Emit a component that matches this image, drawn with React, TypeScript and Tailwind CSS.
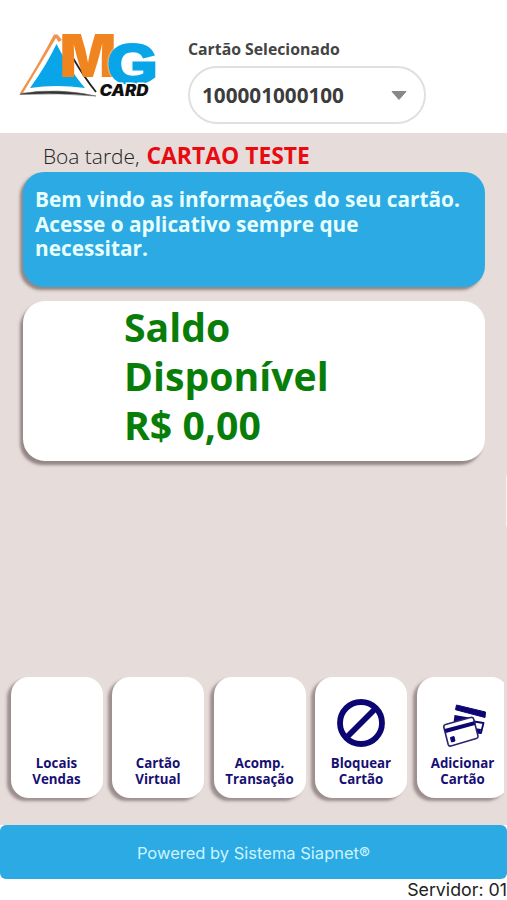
import React from 'react';

const Logo: React.FC = () => (
  <svg className="block" width="148" height="76" viewBox="14 26 148 76" role="img" aria-label="MG Card">
    <path d="M19.500 94 Q39 63 54 34.500 L57.500 34.500 L62 40 L58.500 42 L56 38 L23 93 Z" fill="#f0944c" />
    <path d="M21 93.500 Q58 87.500 96 96 Q59 92.500 20 94.500 Z" fill="#333" stroke="#666" strokeWidth="0.600" />
    <path d="M73 58 Q84 77 96 92" fill="none" stroke="#222" strokeWidth="1.800" />
    <path d="M56.500 44 C65 60 73 74 85 88 Q56 84 30 88 Q46 66 56.500 44 Z" fill="#08a6e8" />
    <text x="59.500" y="77" fontFamily="Inter, sans-serif" fontWeight="900" fontSize="59.500" textLength="57" lengthAdjust="spacingAndGlyphs" fill="#f0841f">M</text>
    <text className="drop-shadow-[0_0_1px_#fff]" x="107.500" y="82.500" fontFamily="Liberation Sans, sans-serif" fontWeight="700" fontSize="55" textLength="50" lengthAdjust="spacingAndGlyphs" fill="#08a6e8" stroke="#08a6e8" strokeWidth="3">G</text>
    <text x="99.500" y="95.500" fontFamily="Inter, sans-serif" fontWeight="900" fontStyle="italic" fontSize="15.500" textLength="49" lengthAdjust="spacingAndGlyphs" fill="#111" stroke="#fff" strokeWidth="3" paintOrder="stroke">CARD</text>
  </svg>
);

const BlockIcon: React.FC = () => (
  <svg width="48" height="48" viewBox="0 0 48 48" fill="none" stroke="#0c0673" strokeWidth="5.800">
    <circle cx="24" cy="24" r="21" />
    <path d="M10 38 38 10" />
  </svg>
);

const CardsIcon: React.FC = () => (
  <svg width="48" height="48" viewBox="0 0 48 48">
    <path d="M17.500 6 46.500 13 46 18.500 16.500 10.700Z" fill="#0c0673" stroke="#0c0673" strokeLinejoin="round" />
    <path d="M15.500 16 33 19 30 25 14.500 24Z" fill="#0c0673" />
    <path d="M35 22.500 44.500 24 42 34 37 33.500Z" fill="#fff" stroke="#0c0673" strokeWidth="1.800" strokeLinejoin="round" />
    <path d="M35 29 42 30 41.500 34 37 34Z" fill="#0c0673" />
    <path d="M6.500 25.500 31.500 18.500 Q34 18 34.700 20 L39 37 Q39.300 39 37.300 39.500 L12 47 Q9.800 47.500 9.200 45.500 L4.800 28 Q4.500 26 6.500 25.500Z" fill="#fff" stroke="#29256f" strokeWidth="1.600" />
    <path d="M5.500 30 35 22.200 36 26 6.800 34Z" fill="#0c0673" />
    <path d="M11.500 38.500 15 37.500 16 42 12.500 43Z" fill="#0c0673" stroke="#0c0673" strokeLinejoin="round" />
  </svg>
);

const actions = [
  { lines: ['Locais', 'Vendas'], icon: null },
  { lines: ['Cartão', 'Virtual'], icon: null },
  { lines: ['Acomp.', 'Transação'], icon: null },
  { lines: ['Bloquear', 'Cartão'], icon: <BlockIcon /> },
  { lines: ['Adicionar', 'Cartão'], icon: <CardsIcon /> },
];

export default function App() {
  return (
    <div className="relative flex h-[900px] w-[507px] flex-col overflow-hidden bg-white font-['Open_Sans','Noto_Sans',sans-serif]">
      <header className="flex h-[133px] shrink-0 pl-3.5">
        <div className="w-[174px] pt-[26px]">
          <Logo />
        </div>
        <div className="pt-[38px]">
          <label className="block h-[28px] text-[15.800px] leading-[22px] font-bold text-[#444]">Cartão Selecionado</label>
          <button className="flex h-[58px] w-[238px] items-center justify-between rounded-full border-2 border-[#e0e0e0] pr-[17px] pl-[12px] text-[20.700px] font-bold text-[#3c3c3c]">
            <span className="pt-0.5">100001000100</span>
            <svg width="16" height="9" viewBox="0 0 16 9">
              <path d="M1 .5H15L8 8.500Z" fill="#888" stroke="#888" strokeLinejoin="round" />
            </svg>
          </button>
        </div>
      </header>

      <main className="flex h-[692px] shrink-0 flex-col bg-[#e6dcda]">
        <p className="flex h-[39px] items-baseline gap-[7px] pt-[9px] pl-[43px] leading-[28px] whitespace-nowrap">
          <span className="text-[20.900px] font-light text-[#222]">Boa tarde,</span>
          <strong className="text-[22.900px] font-bold text-[#e90b12]">CARTAO TESTE</strong>
        </p>
        <section className="ml-[23px] h-[115px] w-[462px] rounded-[21px] bg-[#2caae3] pt-[15px] pl-3 text-[20.800px] leading-[24.500px] font-bold whitespace-nowrap text-[#e8ffff] shadow-[-3px_3px_3px_rgba(65,50,50,0.5)]">
          <p>Bem vindo as informações do seu cartão.</p>
          <p>Acesse o aplicativo sempre que</p>
          <p>necessitar.</p>
        </section>
        <section className="mt-[14px] ml-[23px] h-[160px] w-[462px] rounded-[22px] bg-white pt-px pl-[101px] text-[39.200px] leading-[49px] font-bold text-[#087e09] shadow-[-3px_4px_3px_rgba(65,50,50,0.5)]">
          <p>Saldo</p>
          <p>Disponível</p>
          <p>R$ 0,00</p>
        </section>
        <nav className="mt-auto mb-[21px] flex w-[504px] gap-[9.500px] overflow-hidden pt-2 pb-1.5 pl-[10.500px]">
          {actions.map((action) => (
            <button
              key={action.lines.join(' ')}
              className="flex h-[121px] w-[92px] shrink-0 flex-col items-center rounded-[18px] bg-white pt-[22px] text-[13.300px] leading-4 font-bold text-[#170f73] shadow-[-4px_3px_3px_rgba(65,50,50,0.45)]"
            >
              <span className="mb-[8px] block h-12 w-12">{action.icon}</span>
              <span>{action.lines[0]}</span>
              <span>{action.lines[1]}</span>
            </button>
          ))}
        </nav>
      </main>

      <footer className="shrink-0 font-[Inter,sans-serif]">
        <div className="flex h-[54px] items-center justify-center rounded-[6px] bg-[#2caae3] pt-0.5 text-[16.500px] text-[#ccf4ff]">
          Powered by Sistema Siapnet®
        </div>
        <p className="pt-px text-right text-[17.800px] leading-[20px] text-[#222]">Servidor: 01</p>
      </footer>

      <div className="absolute top-[474px] -right-[5px] h-[54px] w-[6px] rounded-l-[3px] bg-[#f8f4f4]" />
    </div>
  );
}
